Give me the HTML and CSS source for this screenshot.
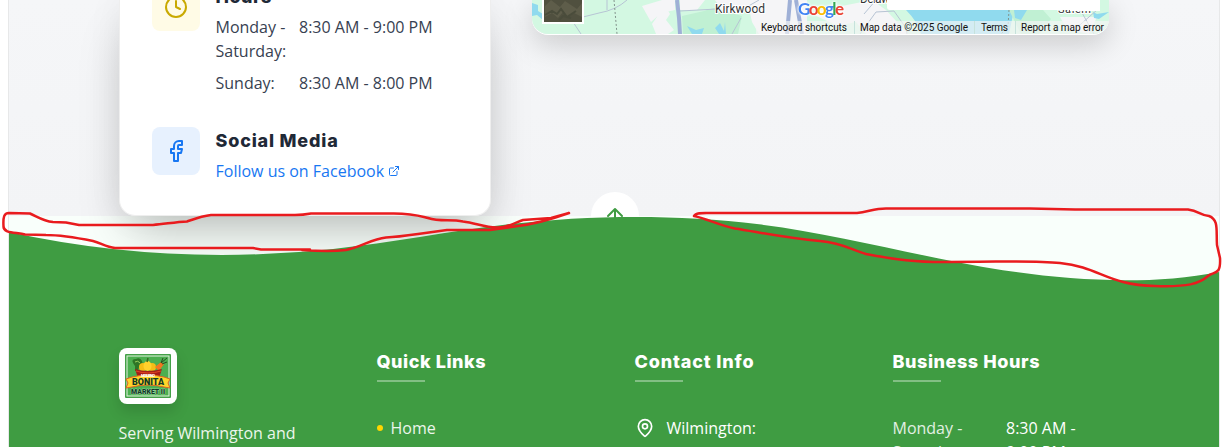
FILE: index.html
```html
<!DOCTYPE html>
<html lang="en">
<head>
<meta charset="utf-8">
<title>Bonita Market II</title>
<link rel="stylesheet" href="styles.css">
</head>
<body>
<div class="page">
  <main class="contact">
    <section class="card">
      <div class="row hours-row">
        <div class="tile tile-yellow"><svg width="24" height="24" viewBox="0 0 24 24" class="ico"><circle cx="12" cy="12" r="10"/><path d="M12 6v6l4 2"/></svg></div>
        <div class="row-body">
          <h3 class="title title-hours">Hours</h3>
          <div class="hours">
            <span>Monday - Saturday:</span><span>8:30 AM - 9:00 PM</span>
            <span>Sunday:</span><span>8:30 AM - 8:00 PM</span>
          </div>
        </div>
      </div>
      <div class="row">
        <div class="tile tile-blue"><svg width="24" height="24" viewBox="0 0 24 24" class="ico"><path d="M18 2h-3a5 5 0 0 0-5 5v3H7v4h3v8h4v-8h3l1-4h-4V7a1 1 0 0 1 1-1h3z"/></svg></div>
        <div class="row-body">
          <h3 class="title title-social">Social Media</h3>
          <a class="link">Follow us on Facebook <svg width="12" height="12" viewBox="0 0 24 24" class="ico"><path d="M18 13v6a2 2 0 0 1-2 2H5a2 2 0 0 1-2-2V8a2 2 0 0 1 2-2h6M15 3h6v6M10 14 21 3"/></svg></a>
        </div>
      </div>
    </section>
    <section class="map">
      <svg class="map-art" width="577" height="34" viewBox="532 0 577 34">
        <rect x="532" width="577" height="34" fill="#d3f8e2"/>
        <path d="M532 3l6 2v6l5 3v6l-6-5-5 1zM904 10h110l-5 24h-88q-3-12-15-24z" fill="#90daee"/>
        <path d="M642 6l20-6h13v10l-14 3-10 9zM652 24l7-10 8-5 3 5-4 6 8 10-6 4h-12zM680 0h25l-8 10h-17zM715 0h42l-6 11-26 3zM747 0h60v34h-48l-7-12zM812 14l10-4 50-10 14 10 22 24h-42l-10-12-18 4zM1060 17h37l-8 17-22-5z" fill="#f5f5f7"/>
        <path d="M682 16l22-5 10-3 28 8-4 18h-55zM1009 10h34l8 9-12 15h-18z" fill="#c0f0d3"/>
        <path d="M687 26l9 4 8-2-2 6h-10zM720 23l4 8 1-9 1 12h-7l-4-6zM1014 10h13l-6 10-6-2zM1093 12l4 2 12-2-10 7-5-1z" fill="#90daee"/>
        <g fill="none" stroke="#b7c4d4" stroke-width="1"><path d="M583 17l16-4q17-3 28-13M607 0v10M573 22l8 12M680 11l37-2M741 18l-9 16M745 8l14-8M864 14l12-14M860 34l16-22 18-1 12 17 1 6M1081 11l13 23M1074 30l23-20"/></g>
        <path d="M677 0l2 18 1 16M790 0l-3 34M796 0l6 34" stroke="#9fb0d6" stroke-width="4" fill="none"/>
        <path d="M614 0l3 34M1009 10l-1 17-7 7" stroke="#82938c" stroke-dasharray="2 2" fill="none"/>
        <rect x="543" width="40" height="23" fill="#50503f"/>
        <path d="M545 6l6-6 9 7 5-6 12 8 5-6v14l-8-4-6 4-5-5-5 6-6-5-7 4z" fill="#5e5d4a"/>
        <path d="M545 15l7-4 5 3 4-5 6 8 9-6M559 20l4-4 8 2" fill="none" stroke="#4a4c3b" stroke-width="2"/>
        <path d="M543 -2v25h40v-25" fill="none" stroke="#fff" stroke-width="2"/>
        <g class="place"><text x="715" y="13" textLength="50">Kirkwood</text><text x="860" y="3" textLength="30">Delaw</text><text x="1058" y="13" textLength="33" font-size="11">Salem</text></g>
        <rect x="1070" width="30" height="11" fill="#fff"/>
        <g class="google"><text x="798" y="14.500" textLength="46"><tspan fill="#4285f4">G</tspan><tspan fill="#ea4335">o</tspan><tspan fill="#fbbc04">o</tspan><tspan fill="#4285f4">g</tspan><tspan fill="#34a853">l</tspan><tspan fill="#ea4335">e</tspan></text></g>
        <path d="M887 0h198v7a3 3 0 0 1-3 3H890a3 3 0 0 1-3-3z" fill="#fff"/>
        <rect x="756" y="21" width="353" height="13" fill="#f5f5f5" opacity=".68"/>
        <path d="M854.500 21v13M974.500 21v13M1015.500 21v13" stroke="#c6e2dc"/>
        <g class="credit"><text x="761" y="31" textLength="86">Keyboard shortcuts</text><text x="860" y="31" textLength="108">Map data ©2025 Google</text><text x="981" y="31" textLength="27">Terms</text><text x="1021" y="31" textLength="83">Report a map error</text></g>
      </svg>
    </section>
  </main>
  <div class="top-button"><svg width="24" height="24" viewBox="0 0 24 24" class="ico"><path d="M12 19V5M5 12l7-7 7 7"/></svg></div>
  <footer class="footer">
    <svg class="wave" width="1210" height="70" viewBox="0 0 1200 120" preserveAspectRatio="none"><path fill="#3f9c42" d="M321.390 56.440c58-10.790 114.160-30.130 172-41.860 82.390-16.720 168.190-17.730 250.450-.390C823.780 31 906.670 72 985.660 92.830c70.050 18.480 146.530 26.090 214.340 3V120H0V27.350A600.210 600.210 0 0 0 321.390 56.440z"/></svg>
    <div class="columns">
      <div class="col">
        <div class="logo">
          <svg width="46" height="44" viewBox="0 0 46 44">
            <rect width="46" height="44" rx="1" fill="#43a047"/><rect x="2" y="2" width="42" height="40" fill="#4caf50" stroke="#e4f4e0"/>
            <path d="M8 9q-2-4 3-4 4-2 6 2 2 5-3 6l-1 4h-3v-5z" fill="#2e7526"/><path d="M10 8q3-2 5 1" stroke="#9bd05e" fill="none"/>
            <ellipse cx="18" cy="13" rx="4" ry="4" fill="#f4bd16"/><ellipse cx="27" cy="13" rx="4" ry="4" fill="#f4bd16"/><ellipse cx="22.500" cy="12" rx="4" ry="5" fill="#ffd12c"/><path d="M22 8l1-4" stroke="#396b22" stroke-width="1.500"/>
            <path d="M30 13l6-5 3 2-5 7z" fill="#f17720"/><path d="M36 9l6-5M36 9l2-5M37 10l5-2" stroke="#264d20"/>
            <path d="M10 15q12 4 27 0l-3 9H13z" fill="#a51e18"/><path d="M11 17q12 4 25 0" stroke="#e14624" fill="none"/>
            <path d="M1 25l6-2q16-4 32 0l6 2-2 4 2 5-6-1q-16-4-32 0l-6 1 2-5z" fill="#ffd52a" stroke="#dd6324"/>
            <text x="16" y="22.500" font-size="4" fill="#fff" textLength="14">MI SUENO</text>
            <text x="7" y="31" font-size="9.500" fill="#123b27" textLength="32" lengthAdjust="spacingAndGlyphs">BONITA</text>
            <text x="6" y="40" font-size="7.500" fill="#123b27" stroke="#c4e8c5" stroke-width=".7" paint-order="stroke" textLength="34" lengthAdjust="spacingAndGlyphs">MARKET II</text>
          </svg>
        </div>
        <p class="about">Serving Wilmington and</p>
      </div>
      <div class="col"><h4 class="ftitle t-links">Quick Links</h4><div class="item"><i class="dot"></i><span>Home</span></div></div>
      <div class="col"><h4 class="ftitle t-contact">Contact Info</h4><div class="item place-item"><svg width="20" height="20" viewBox="0 0 24 24" class="ico"><path d="M20 10c0 5-5.500 10.200-7.400 11.800a1 1 0 0 1-1.200 0C9.500 20.200 4 15 4 10a8 8 0 0 1 16 0z"/><circle cx="12" cy="10" r="3"/></svg><span>Wilmington:</span></div></div>
      <div class="col"><h4 class="ftitle t-hours">Business Hours</h4><div class="fhours"><span>Monday - Saturday:</span><span class="bright">8:30 AM - 9:00 PM</span></div></div>
    </div>
  </footer>
</div>
<svg class="marks" width="1223" height="447" viewBox="0 0 1223 447">
  <path d="M9 213L30 213.500C38 217 43 221 53 222L66 222.500 79 225H153C165 224 176 222 187 221.500C197 218 202 216 211 215H295Q303 215 311 213.500H390C412 213 420 216 428 218C440 222 450 219 463 221.500C475 223 485 227 496 227.500C508 228 516 222 523 220L551 218 569 213C552 219 535 224 518 226L490 230H447L418 234C404 236 397 237 386 237.500C371 239 362 247 346 250Q330 252 302 250L310 249.500H261L253 248H115C106 247 101 243 93 241C78 238 60 235 46 235L25 234.500C17 232 3 234 3.500 226C3 217 4 213 9 213z"/>
  <path d="M694 216C696 212 704 213 713 213H857C868 212 874 208.500 886 208.500H1030L1075 209.500H1188C1199 211 1200 215 1209 216C1219 220 1216 230 1217 245L1220 258C1221 276 1214 271 1208 276C1199 284 1188 287 1155 286C1107 285 1100 267 1060 263C1033 260 1010 262 934 262C904 261 888 258 866 254C850 249 842 243 820 241C785 238 758 232 735 228.500C718 225 708 219 694 216"/>
</svg>
</body>
</html>
```
FILE: styles.css
```css
* { box-sizing: border-box; }
body { margin: 0; background: #fff; font: 16px/24px "Noto Sans", sans-serif; }
.page { position: relative; width: 1212px; height: 447px; margin-left: 8px; border: solid #e7e8e9; border-width: 0 1px; overflow: hidden; background: linear-gradient(#f5f6f8, #f3f4f6 216px, #f9fffb 216px); }
.ico { fill: none; stroke: currentColor; stroke-width: 2; stroke-linecap: round; stroke-linejoin: round; }
.contact { display: flex; gap: 41px; height: 216px; padding: 0 110px; }
.card { display: flex; flex-direction: column; justify-content: flex-end; gap: 32px; width: 372px; height: 216px; padding: 0 32px 32px; background: #fff; border: 1px solid #eee; border-top: 0; border-radius: 0 0 16px 16px; box-shadow: 0 25px 50px -12px rgba(0,0,0,.25), 0 0 36px rgba(0,0,0,.06); }
.row { display: flex; gap: 15.500px; }
.tile { display: grid; place-items: center; flex: none; width: 48px; height: 48px; border-radius: 8px; }
.tile-yellow { background: #fffbe6; color: #c9a900; }
.tile-blue { background: #e7f1fe; color: #1877f2; }
.title { margin: 0; height: 28px; font: 800 18px/28px Inter, sans-serif; color: #1f2937; white-space: nowrap; }
.title-social { letter-spacing: .8px; }
.title-hours { margin-bottom: 4px; letter-spacing: .5px; }
.hours { display: grid; grid-template-columns: 75.500px auto; gap: 8px; color: #374151; font-family: "Open Sans", sans-serif; }
.link { display: flex; align-items: center; gap: 4px; height: 24px; margin-top: 4px; color: #1877f2; font-family: "Open Sans", sans-serif; }
.map { width: 577px; height: 34px; border-radius: 0 0 16px 16px; box-shadow: 0 1px 0 #fff, 0 10px 30px rgba(0,0,0,.18); }
.map-art { display: block; border-radius: 0 0 16px 16px; }
.place { font: 12px Roboto, sans-serif; fill: #333; stroke: #fff; stroke-width: 2px; paint-order: stroke; }
.google { font: 700 17px Lato, sans-serif; filter: drop-shadow(0 0 1px #fff) drop-shadow(0 0 1px #fff); }
.credit { font: 10px Roboto, sans-serif; fill: #111; }
.top-button { position: absolute; left: 582px; top: 192px; display: flex; justify-content: center; padding-top: 12px; width: 48px; height: 48px; border-radius: 50%; background: #fff; color: #3f9c42; }
.footer { position: relative; height: 231px; color: #fff; font-family: "Open Sans", sans-serif; background: linear-gradient(transparent 69px, #3f9c42 69px); }
.wave { display: block; }
.columns { display: grid; grid-template-columns: repeat(4, 210px); gap: 48px; padding: 62px 109.500px 0; }
.logo { display: grid; place-items: center; width: 58px; height: 56px; background: #fff; border-radius: 8px; box-shadow: 0 8px 14px rgba(0,0,0,.13); font: 900 8px Roboto, sans-serif; }
.about { margin: 17px 0 0; white-space: nowrap; color: #ecf6ec; }
.ftitle { height: 34px; margin: 0 0 34px; font: 800 18px/28px Inter, sans-serif; white-space: nowrap; border-image: linear-gradient(90deg, #82bf84 48.500px, transparent 48.500px) 1; border-style: solid; border-width: 0 0 2px; }
.t-links { letter-spacing: .55px; }
.t-contact { letter-spacing: .85px; }
.t-hours { letter-spacing: .57px; }
.item { display: flex; align-items: center; gap: 8px; color: #ecf6ec; }
.dot { width: 6px; height: 6px; border-radius: 50%; background: #ffd600; }
.place-item { gap: 12px; color: #fff; }
.fhours { display: grid; grid-template-columns: 97.500px 97px; gap: 16px; color: #e2f0e3; }
.bright { color: #fff; }
.marks { position: absolute; inset: 0; fill: none; stroke: #e91b1e; stroke-width: 2.500; stroke-linecap: round; stroke-linejoin: round; pointer-events: none; }
```
